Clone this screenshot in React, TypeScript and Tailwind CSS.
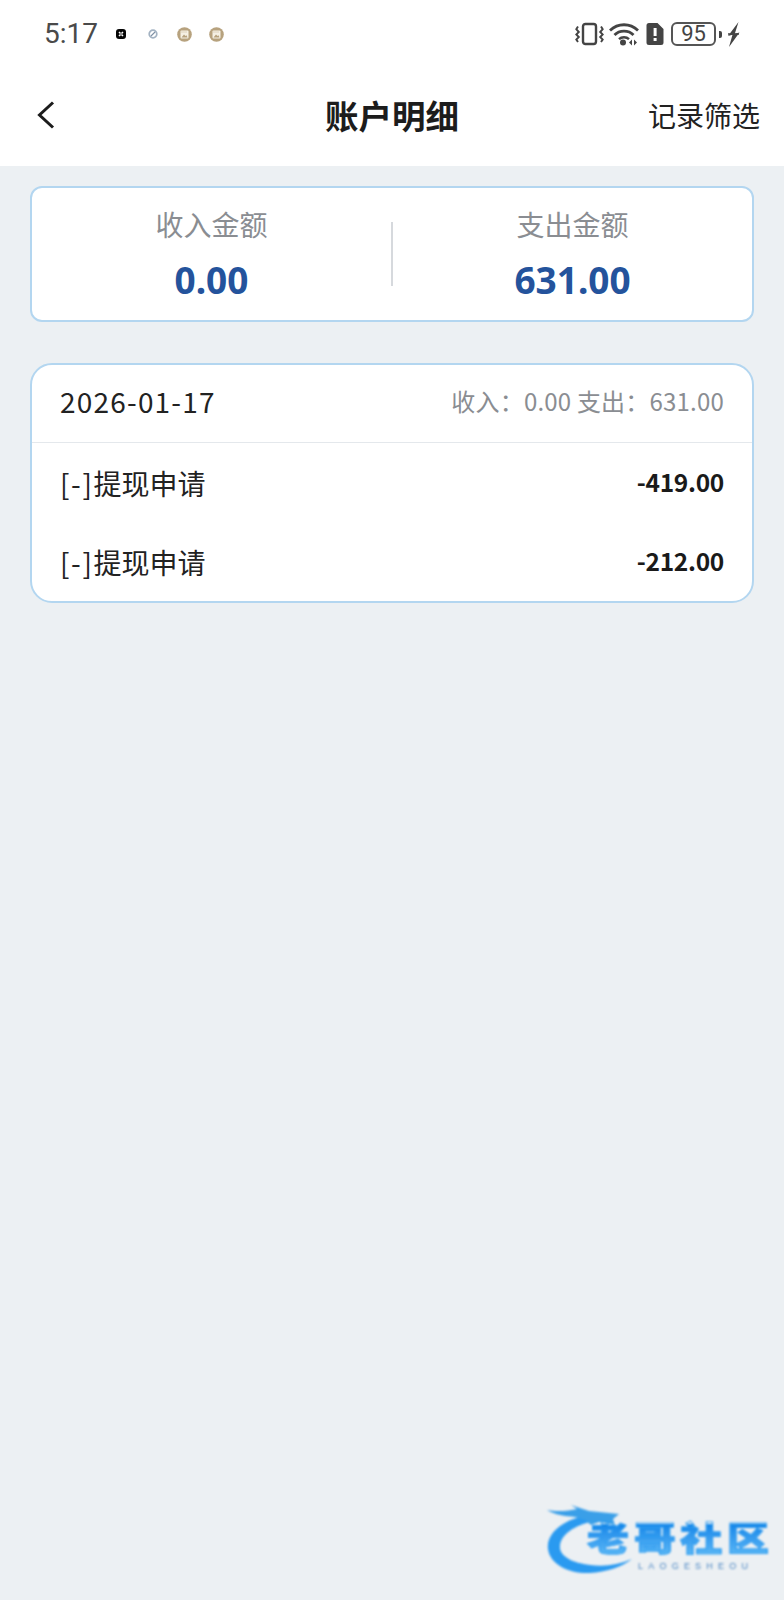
const cjk = "font-['Noto_Sans_CJK_SC','Noto_Sans',sans-serif]"

function NotificationDots() {
  return (
    <div className="ml-[18px] flex items-center">
      <svg width="10" height="10" viewBox="0 0 10 10" className="mr-[22px]">
        <rect width="10" height="10" rx="3" fill="#050505" />
        <path d="M3 3l4 4M7 3 3 7" stroke="#fff" strokeWidth="1.500" />
        <circle cx="5" cy="5" r="0.800" fill="#050505" />
      </svg>
      <svg width="10" height="10" viewBox="0 0 10 10" className="mr-[19px]">
        <circle cx="5" cy="5" r="3.800" fill="none" stroke="#a3b2c2" strokeWidth="1.700" />
        <path d="M3 7 7 3" stroke="#7d8fa3" strokeWidth="1.100" />
      </svg>
      <PhotoDot />
      <div className="w-[17px]" />
      <PhotoDot />
    </div>
  )
}

function PhotoDot() {
  return (
    <svg width="15" height="15" viewBox="0 0 15 15">
      <circle cx="7.500" cy="7.500" r="7.300" fill="#b7a27e" />
      <rect x="3.500" y="3.500" width="8" height="8" rx="1" fill="#f5f0e4" />
      <path d="M4.500 10.400 7 7.600l1.600 1.500 1-.8.900 2.100z" fill="#b7a27e" />
      <path d="M4.500 5h6" stroke="#b7a27e" strokeWidth="0.800" strokeDasharray="1 1" />
    </svg>
  )
}

function StatusIcons() {
  return (
    <div className="flex items-center">
      <svg width="29" height="24" viewBox="0 0 29 24" fill="none" stroke="#444">
        <rect x="8" y="2" width="13" height="20" rx="2.400" strokeWidth="2.400" />
        <path d="M3 4.500 1.300 7.200 3.800 10l-2.500 2.500L3.800 15l-2.500 2.500L3 20M26 4.500l1.700 2.700L25.200 10l2.500 2.500L25.200 15l2.500 2.500L26 20" strokeWidth="1.900" />
      </svg>
      <svg width="30" height="24" viewBox="0 0 30 24" fill="none" className="ml-[5px]">
        <path d="M1 8.500C9 .8 21 .8 29 8.500" stroke="#444" strokeWidth="2.800" />
        <path d="M5.500 13c5-5.200 14-5.200 19 0" stroke="#444" strokeWidth="2.800" />
        <path d="M10 17.200c2.700-2.700 7.300-2.700 10 0" stroke="#444" strokeWidth="2.400" />
        <circle cx="14" cy="20.400" r="3" fill="#444" />
        <path d="M23 17.500 20 20.500l3 3zM25 17.500l3 3-3 3z" fill="#444" />
      </svg>
      <svg width="18" height="24" viewBox="0 0 18 24" className="ml-[7px]">
        <path d="M3 1h8.500L17.500 7v13.500A2.500 2.500 0 0 1 15 23H3A2.500 2.500 0 0 1 .5 20.500v-17A2.500 2.500 0 0 1 3 1z" fill="#444" />
        <rect x="7.600" y="6" width="3" height="8" fill="#fff" />
        <rect x="7.600" y="16" width="3" height="3" fill="#fff" />
      </svg>
      <div className="ml-[7px] flex h-[24px] w-[45px] items-center justify-center rounded-[6px] border-2 border-[#555] font-['Roboto',sans-serif] text-[22px] leading-none text-[#444]">
        95
      </div>
      <div className="ml-[3px] h-[7px] w-[3px] rounded-r-[2px] bg-[#444]" />
      <svg width="13" height="25" viewBox="0 0 13 25" className="ml-[5px]">
        <path d="M11.500 0 1 14l4.500-1.300L2 25l10.500-14.500-4.700 1.200z" fill="#444" />
        <path d="M1 12h11" stroke="#444" strokeWidth="1.500" />
      </svg>
    </div>
  )
}

function SummaryCell({ label, value }: { label: string; value: string }) {
  return (
    <div className="flex flex-1 flex-col items-center pb-[3px]">
      <span className="-translate-y-[2px] text-[28px] leading-[40px] text-[#8a8d92]">{label}</span>
      <span className="mt-[14px] font-['Noto_Sans',sans-serif] text-[37px] font-bold leading-[40px] text-[#24539c]">{value}</span>
    </div>
  )
}

function RecordRow({ label, amount }: { label: string; amount: string }) {
  return (
    <div className="flex h-[79px] items-center justify-between">
      <span className="text-[28px] leading-none text-[#222]">
        <span className="tracking-[1.6px]">[-]</span>
        {label}
      </span>
      <span className="text-[24.500px] font-bold leading-none tracking-[-0.3px] text-[#1a1a1a]">{amount}</span>
    </div>
  )
}

export default function App() {
  return (
    <div className={`relative flex h-[1600px] w-[784px] flex-col overflow-hidden bg-[#ecf0f3] ${cjk}`}>
      <header className="bg-white">
        <div className="flex h-[66px] items-center justify-between px-[44px] pt-[2px]">
          <div className="flex items-center">
            <span className="font-['Roboto',sans-serif] text-[28px] leading-none text-[#4a4a4a]">5:17</span>
            <NotificationDots />
          </div>
          <StatusIcons />
        </div>
        <nav className="relative flex h-[100px] items-center justify-between pb-[2px] pl-[37px] pr-[24px]">
          <svg width="18" height="28" viewBox="0 0 18 28" fill="none" stroke="#1c1c1c" strokeWidth="3">
            <path d="M16 1.500 2.500 14 16 26.500" />
          </svg>
          <h1 className="absolute inset-x-0 text-center text-[33.500px] font-bold leading-none text-[#1c1c1c]">账户明细</h1>
          <span className="text-[28px] leading-none text-[#222]">记录筛选</span>
        </nav>
      </header>

      <main className="flex flex-col gap-[41px] px-[30px] pt-[20px]">
        <section className="flex h-[136px] items-center rounded-[12px] border-2 border-[#b3d6f0] bg-white">
          <SummaryCell label="收入金额" value="0.00" />
          <div className="h-[64px] w-[2px] bg-[#d6d9dd]" />
          <SummaryCell label="支出金额" value="631.00" />
        </section>

        <section className="rounded-[22px] border-2 border-[#b3d6f0] bg-white">
          <div className="flex h-[78px] items-center justify-between border-b border-[#e4e8ec] pb-[5px] pl-[28px] pr-[28px]">
            <span className="text-[28px] leading-none tracking-[1.2px] text-[#222]">2026-01-17</span>
            <span className="text-[24px] leading-none tracking-[0.2px] text-[#8a8d92]">收入：0.00 支出：631.00</span>
          </div>
          <div className="px-[28px]">
            <RecordRow label="提现申请" amount="-419.00" />
            <RecordRow label="提现申请" amount="-212.00" />
          </div>
        </section>
      </main>

      {/* site watermark, sits over the page */}
      <div className="absolute left-[545px] top-[1503px] h-[75px] w-[225px] blur-[0.8px]">
        <svg width="225" height="75" viewBox="0 0 225 75" className="absolute left-0 top-0">
          <path d="M42 12C18 17 1 30 3 46c2 16 22 25 42 24 16-1 32-6 42-14-14 6-28 8-42 6C27 60 14 53 15 43c1-12 14-20 33-25z" fill="#2a9af0" />
          <path d="M2 7c10 2 22 1 30-1l-6-4 18 6 30 3-6 5 2 6-16-3-8 3-6-5-10-3C20 13 10 12 2 7z" fill="#3a9fe8" />
        </svg>
        <div className="absolute left-[42px] top-[21px] flex w-[182px] origin-top scale-y-[0.8] justify-between bg-gradient-to-b from-[#0f85e8] to-[#5cb9f6] bg-clip-text font-['Liberation_Sans','Noto_Sans_CJK_SC',sans-serif] text-[42px] font-black leading-[40px] text-transparent [-webkit-text-stroke:1px_#2a9af0]">
          <span>老</span>
          <span>哥</span>
          <span>社</span>
          <span>区</span>
        </div>
        <div className="absolute left-[93px] top-[58px] flex w-[110px] justify-between font-['Liberation_Sans',sans-serif] text-[9px] leading-[10px] text-[#4a86c4]">
          {'LAOGESHEOU'.split('').map((c, i) => (
            <span key={i}>{c}</span>
          ))}
        </div>
      </div>
    </div>
  )
}
